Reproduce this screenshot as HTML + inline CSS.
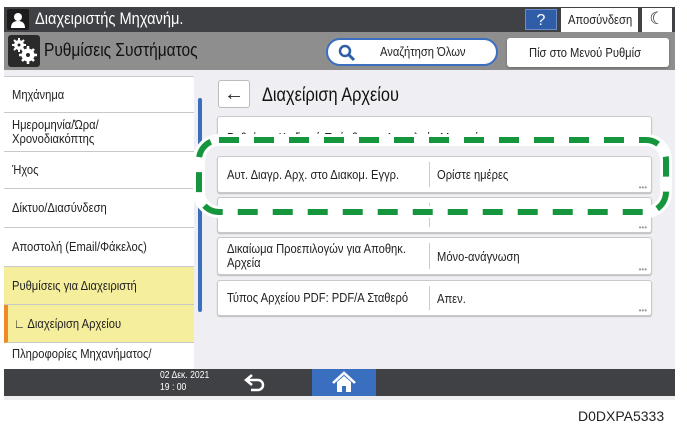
<!DOCTYPE html>
<html><head><meta charset="utf-8"><style>
*{margin:0;padding:0;box-sizing:border-box}
body{width:687px;height:431px;background:#fff;position:relative;overflow:hidden;font-family:"Liberation Sans",sans-serif;color:#222}
.a{position:absolute}
.n{display:inline-block;transform:scaleX(.86);transform-origin:left center;white-space:nowrap}
.side div{position:absolute;left:4px;width:190px;border-bottom:1px solid #c8c8c8;font-size:13px;padding-left:8px;display:flex;align-items:center;line-height:14px;background:#fff;white-space:nowrap}
.row{position:absolute;left:217px;width:435px;background:#fff;border:1px solid #c9c9cc;border-radius:3px;box-shadow:0 1px 1px #bbb;font-size:13px}
.row .l{position:absolute;left:9px;top:0;bottom:0;display:flex;align-items:center;line-height:14px;width:240px}
.row .d{position:absolute;left:211px;top:5px;bottom:5px;width:1px;background:#ccc}
.row .r{position:absolute;left:219px;top:0;bottom:0;display:flex;align-items:center}
.row .dots{position:absolute;right:4px;bottom:0;font-size:8px;color:#999;line-height:8px}
</style></head><body>
<div class="a" style="left:4px;top:7px;width:671px;height:25px;background:#404145"></div>
<div class="a" style="left:7px;top:9px;width:22px;height:21px;background:#1c1c1c;border-radius:2px"><svg width="22" height="21"><circle cx="11" cy="8" r="4" fill="#fff"/><path d="M4 19 Q4 12 11 12 Q18 12 18 19Z" fill="#fff"/></svg></div>
<div class="a" style="left:35px;top:9px;color:#fff;font-size:17px"><span class="n">Διαχειριστής Μηχανήμ.</span></div>
<div class="a" style="left:525px;top:9px;width:32px;height:21px;background:#2f5da8;color:#fff;text-align:center;font-size:16px;line-height:21px;border:1px solid #6a8cc8">?</div>
<div class="a" style="left:561px;top:8px;width:77px;height:24px;background:#fff;font-size:13px;line-height:24px;padding-left:7px"><span class="n">Αποσύνδεση</span></div>
<div class="a" style="left:642px;top:8px;width:30px;height:24px;background:#fff;font-size:17px;text-align:center;line-height:22px">☾</div>
<div class="a" style="left:4px;top:32px;width:671px;height:38px;background:#8e8e8e"></div>
<div class="a" style="left:8px;top:35px;width:32px;height:32px;background:#2a2a2a;border-radius:3px"><svg width="32" height="32"><g fill="none" stroke="#fff"><circle cx="11" cy="10" r="3.5" stroke-width="3"/><circle cx="20" cy="20" r="4.5" stroke-width="4"/><path d="M11 3v14M4 10h14M6 5l10 10M16 5L6 15" stroke-width="2"/><path d="M20 11v18M11 20h18M14 14l12 12M26 14l-12 12" stroke-width="2.5"/></g><circle cx="11" cy="10" r="1.5" fill="#2a2a2a"/><circle cx="20" cy="20" r="2" fill="#2a2a2a"/></svg></div>
<div class="a" style="left:44px;top:40px;color:#111;font-size:18px"><span class="n">Ρυθμίσεις Συστήματος</span></div>
<div class="a" style="left:326px;top:38px;width:172px;height:28px;background:#fff;border:2px solid #3a6fc0;border-radius:14px;font-size:13px;line-height:24px"><svg style="position:absolute;left:10px;top:4px" width="18" height="18"><circle cx="7" cy="7" r="5" fill="none" stroke="#2f5da8" stroke-width="2.5"/><path d="M11 11l5 5" stroke="#2f5da8" stroke-width="3"/></svg><span class="n" style="position:absolute;left:52px">Αναζήτηση Όλων</span></div>
<div class="a" style="left:507px;top:38px;width:162px;height:29px;background:#fff;border-radius:3px;box-shadow:0 1px 2px #666;font-size:13px;line-height:29px;padding-left:22px"><span class="n">Πίσ στο Μενού Ρυθμίσ</span></div>
<div class="a" style="left:4px;top:70px;width:671px;height:299px;background:#efeef2"></div>
<div class="side">
<div style="top:76px;height:37px;border-top:1px solid #ccc"><span class="n">Μηχάνημα</span></div>
<div style="top:113px;height:39px"><span class="n">Ημερομηνία/Ώρα/<br>Χρονοδιακόπτης</span></div>
<div style="top:152px;height:37px"><span class="n">Ήχος</span></div>
<div style="top:189px;height:39px"><span class="n">Δίκτυο/Διασύνδεση</span></div>
<div style="top:228px;height:39px"><span class="n">Αποστολή (Email/Φάκελος)</span></div>
<div style="top:267px;height:38px;background:#f5ee9c"><span class="n">Ρυθμίσεις για Διαχειριστή</span></div>
<div style="top:305px;height:38px;background:#f5ee9c;border-left:4px solid #f08a24;padding-left:6px"><span class="n">∟ Διαχείριση Αρχείου</span></div>
<div style="top:343px;height:26px;align-items:flex-start;padding-top:4px;overflow:hidden;border:none"><span class="n">Πληροφορίες Μηχανήματος/</span></div>
</div>
<div class="a" style="left:198px;top:98px;width:4px;height:214px;background:#3a6fc0;border-radius:2px"></div>
<div class="a" style="left:218px;top:80px;width:32px;height:28px;background:#fff;border:1px solid #bbb;border-radius:3px;font-size:20px;text-align:center;line-height:26px">←</div>
<div class="a" style="left:262px;top:85px;font-size:19px;color:#111"><span class="n">Διαχείριση Αρχείου</span></div>
<div class="row" style="top:116px;height:28px;overflow:hidden"><div class="l" style="top:14px;width:400px;align-items:flex-start"><span class="n">Ρυθμίσεις Κωδικού Πρόσβασης Ασφαλούς Μηχανήματος</span></div></div>
<div class="row" style="top:156px;height:37px"><div class="l"><span class="n">Αυτ. Διαγρ. Αρχ. στο Διακομ. Εγγρ.</span></div><div class="d"></div><div class="r"><span class="n">Ορίστε ημέρες</span></div><div class="dots">•••</div></div>
<div class="row" style="top:197px;height:36px"><div class="d"></div><div class="dots">•••</div></div>
<div class="row" style="top:237px;height:38px"><div class="l"><span class="n">Δικαίωμα Προεπιλογών για Αποθηκ.<br>Αρχεία</span></div><div class="d"></div><div class="r"><span class="n">Μόνο-ανάγνωση</span></div><div class="dots">•••</div></div>
<div class="row" style="top:280px;height:36px"><div class="l"><span class="n">Τύπος Αρχείου PDF: PDF/A Σταθερό</span></div><div class="d"></div><div class="r"><span class="n">Απεν.</span></div><div class="dots">•••</div></div>
<svg class="a" style="left:0;top:0" width="687" height="431"><rect x="199" y="140" width="467" height="72" rx="20" fill="none" stroke="#fff" stroke-width="12"/><rect x="199" y="140" width="467" height="72" rx="20" fill="none" stroke="#16963c" stroke-width="6" stroke-dasharray="20 15"/></svg>
<div class="a" style="left:4px;top:369px;width:671px;height:27px;background:#404145"></div>
<div class="a" style="left:160px;top:370px;color:#fff;font-size:10px;line-height:12px"><span class="n">02 Δεκ. 2021<br>19 : 00</span></div>
<svg class="a" style="left:243px;top:372px" width="24" height="22"><path d="M9 3 L3 8 L9 13 M3 8 H15 A5 5 0 0 1 15 18 H8" fill="none" stroke="#fff" stroke-width="2.5"/></svg>
<div class="a" style="left:312px;top:369px;width:64px;height:27px;background:#3a6fc0"></div>
<svg class="a" style="left:331px;top:371px" width="26" height="23"><path d="M2 12 L13 2 L24 12" fill="none" stroke="#fff" stroke-width="2.5"/><path d="M6 11 V21 H11 V15 H15 V21 H20 V11 L13 5Z" fill="#fff"/></svg>
<div class="a" style="left:4px;top:396px;width:671px;height:4px;background:#eeeef0"></div>
<div class="a" style="left:578px;top:408px;font-size:14px;color:#222">D0DXPA5333</div>
</body></html>
